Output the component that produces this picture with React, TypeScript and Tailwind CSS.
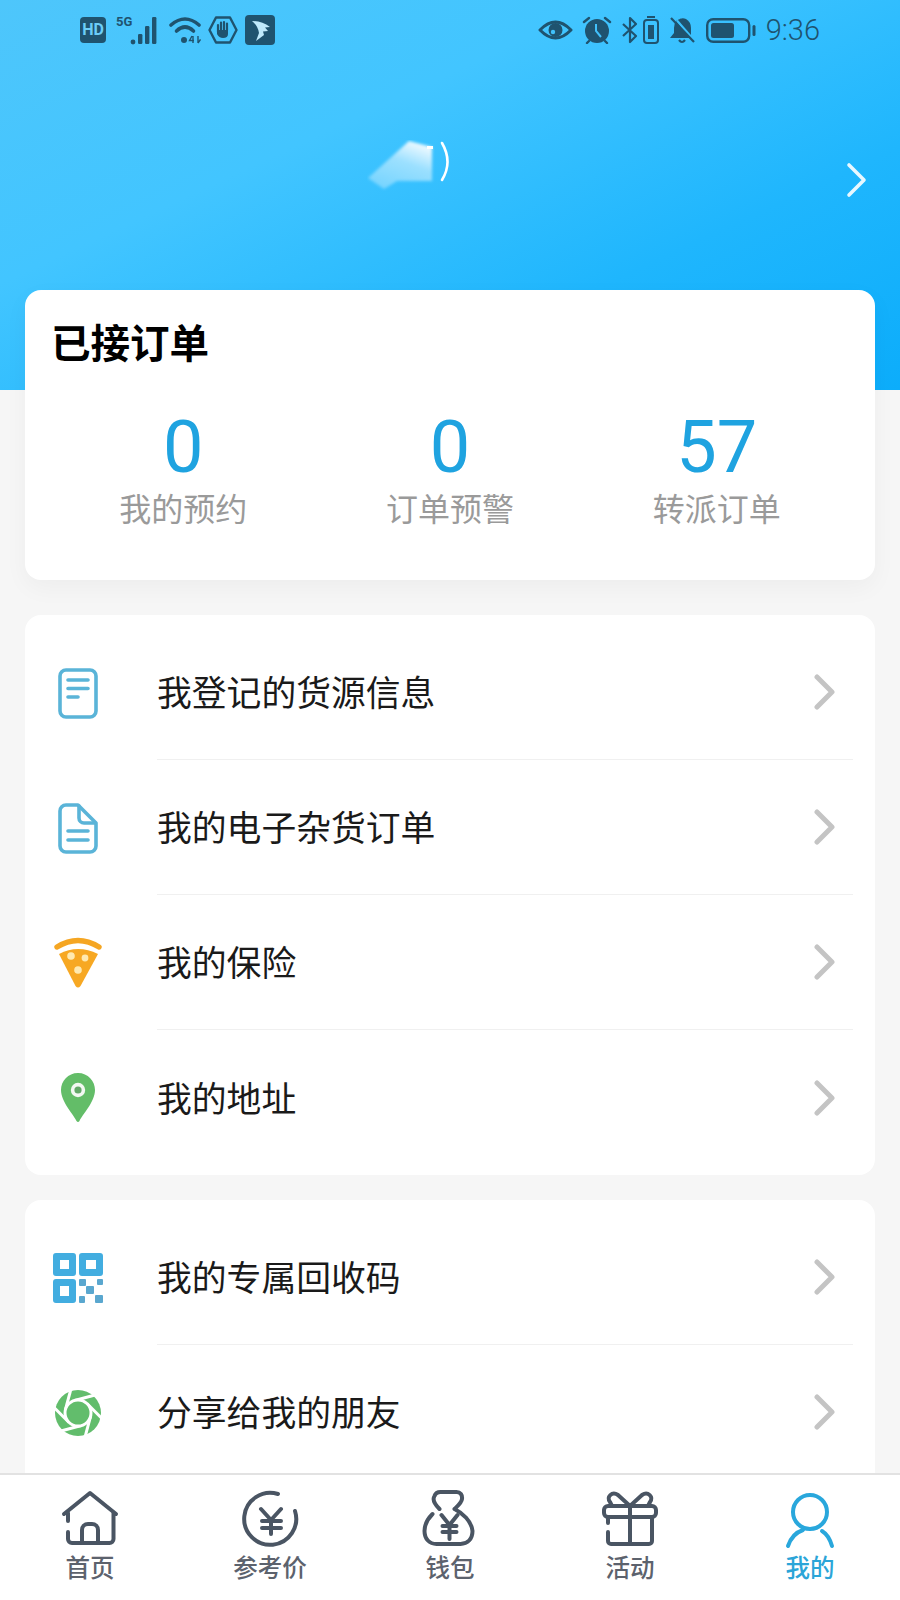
import React from "react";

const cjk = "font-['Noto_Sans_CJK_SC','Noto_Sans',sans-serif]";
const sb = "#1f536f";
const bgc = "#41c1fb";

function HD() {
  return (
    <span className="flex h-[26px] w-[26px] items-center justify-center rounded-[4px] bg-[#1f536f] font-['Roboto',sans-serif] text-[16px] font-bold text-[#6ccdf7]">
      HD
    </span>
  );
}
function Signal() {
  return (
    <svg width="44" height="30" viewBox="0 0 44 30" className="shrink-0">
      <text x="0" y="11" fontSize="13" fontWeight="700" fill={sb} fontFamily="Roboto, sans-serif">5G</text>
      <circle cx="17" cy="27" r="2.4" fill={sb} />
      <rect x="22" y="19" width="4.4" height="10" rx="1.2" fill={sb} />
      <rect x="29" y="11" width="4.4" height="18" rx="1.2" fill={sb} />
      <rect x="36" y="2" width="4.4" height="27" rx="1.2" fill={sb} />
    </svg>
  );
}
function Wifi() {
  return (
    <svg width="32" height="28" viewBox="0 0 32 28" fill="none" stroke={sb} className="shrink-0">
      <path d="M2 9 Q16 -3 30 9" strokeWidth="3.6" strokeLinecap="round" />
      <path d="M7.5 15 Q16 7 24.5 15" strokeWidth="3.6" strokeLinecap="round" />
      <circle cx="15" cy="24" r="3" fill={sb} stroke="none" />
      <path d="M23 20 L20.5 24.5 H25 M24 20 V27" strokeWidth="1.4" />
      <path d="M29 20 V27 M29 27 L31.5 23.5" strokeWidth="1.4" />
    </svg>
  );
}
function StopHand() {
  return (
    <svg width="30" height="28" viewBox="0 0 30 28" fill="none" className="shrink-0">
      <path d="M8 1.5 H22 L28.5 14 L22 26.5 H8 L1.5 14Z" stroke={sb} strokeWidth="2.4" strokeLinejoin="round" />
      <path d="M10 16 V9 M13 14 V6.5 M16 14 V6 M19 14 V7.5" stroke={sb} strokeWidth="2.2" strokeLinecap="round" />
      <path d="M9 14 H20 V18 Q20 22 15 22 Q11 22 9 18Z" fill={sb} />
    </svg>
  );
}
function AppIcon() {
  return (
    <svg width="30" height="30" viewBox="0 0 30 30" className="shrink-0">
      <rect width="30" height="30" rx="4" fill={sb} />
      <path d="M7 6 Q17 6 25 12 L20 12.5 L23 16 L18 16.5 L19 20 L11 26 L14 18 Q13 11 7 6Z" fill="#bfe9fb" />
    </svg>
  );
}
function Eye() {
  return (
    <svg width="35" height="22" viewBox="0 0 35 22" fill="none" className="shrink-0">
      <path d="M2 11 Q17.5 -5 33 11 Q17.5 27 2 11Z" stroke={sb} strokeWidth="3" strokeLinejoin="round" />
      <circle cx="17.5" cy="11" r="7" fill={sb} />
      <circle cx="15" cy="13" r="2.2" fill={bgc} />
    </svg>
  );
}
function Alarm() {
  return (
    <svg width="30" height="28" viewBox="0 0 30 28" fill="none" className="shrink-0">
      <circle cx="15" cy="15" r="12" fill={sb} />
      <path d="M14 8 V15 L19 21" stroke={bgc} strokeWidth="2" />
      <path d="M2 6 L7 2 M28 6 L23 2 M7 25 L5 27 M23 25 L25 27" stroke={sb} strokeWidth="2.4" strokeLinecap="round" />
    </svg>
  );
}
function Bluetooth() {
  return (
    <svg width="16" height="28" viewBox="0 0 16 28" fill="none" stroke={sb} strokeWidth="2.2" className="shrink-0">
      <path d="M1 8 L14 20 L8 26 V2 L14 8 L1 20" strokeLinejoin="round" />
    </svg>
  );
}
function SmallBattery() {
  return (
    <svg width="16" height="28" viewBox="0 0 16 28" fill="none" className="shrink-0">
      <path d="M4 1 H12" stroke={sb} strokeWidth="2" />
      <rect x="1" y="4" width="14" height="23" rx="3" stroke={sb} strokeWidth="2" />
      <rect x="5" y="9" width="6" height="14" fill={sb} />
    </svg>
  );
}
function BellOff() {
  return (
    <svg width="27" height="28" viewBox="0 0 27 28" fill="none" className="shrink-0">
      <path d="M13 2 Q5 4 5 12 V17 L1 22 H21 L7 5Z" fill={sb} />
      <path d="M9 4 Q13 1 17 3 Q22 6 22 12 V19 Z" fill={sb} />
      <path d="M10 24 Q13 28 16 24" stroke={sb} strokeWidth="2.2" />
      <path d="M2 2 L25 26" stroke={sb} strokeWidth="2.2" />
    </svg>
  );
}
function Battery() {
  return (
    <svg width="50" height="25" viewBox="0 0 50 25" fill="none" className="shrink-0">
      <rect x="1.2" y="1.2" width="42" height="22.6" rx="6" stroke={sb} strokeWidth="2.4" />
      <rect x="5" y="5" width="23" height="15" rx="2.5" fill={sb} />
      <rect x="46.5" y="7" width="3" height="11" rx="1.5" fill={sb} />
    </svg>
  );
}

function StatusBar() {
  return (
    <div className="flex h-[60px] items-center justify-between pl-[80px] pr-[80px]">
      <div className="flex items-center">
        <HD />
        <span className="ml-[10px]"><Signal /></span>
        <span className="ml-[9px]"><Wifi /></span>
        <span className="ml-[7px]"><StopHand /></span>
        <span className="ml-[7px]"><AppIcon /></span>
      </div>
      <div className="flex items-center">
        <Eye />
        <span className="ml-[9px]"><Alarm /></span>
        <span className="ml-[10px]"><Bluetooth /></span>
        <span className="ml-[5px]"><SmallBattery /></span>
        <span className="ml-[10px]"><BellOff /></span>
        <span className="ml-[10px]"><Battery /></span>
        <span className="ml-[10px] font-['Roboto',sans-serif] text-[29px] font-light leading-none text-[#1f536f]">9:36</span>
      </div>
    </div>
  );
}

function Chevron({ color, w = 5, h = 30 }: { color: string; w?: number; h?: number }) {
  return (
    <svg width="22" height={h + 6} viewBox={`0 0 22 ${h + 6}`} fill="none" className="shrink-0">
      <path d={`M3 3 L18 ${(h + 6) / 2} L3 ${h + 3}`} stroke={color} strokeWidth={w} strokeLinecap="round" strokeLinejoin="round" />
    </svg>
  );
}

function Smear() {
  return (
    <svg width="90" height="52" viewBox="0 0 90 52" fill="none" className="shrink-0">
      <defs>
        <linearGradient id="sm" x1="0.2" y1="1" x2="0.7" y2="0">
          <stop offset="0" stopColor="#ffffff" stopOpacity="0.3" />
          <stop offset="0.6" stopColor="#ffffff" stopOpacity="0.5" />
          <stop offset="1" stopColor="#ffffff" stopOpacity="0.92" />
        </linearGradient>
        <filter id="bl"><feGaussianBlur stdDeviation="1.6" /></filter>
      </defs>
      <path d="M42 1 L65 7 V41 L30 41 L17 49 L1 38Z" fill="url(#sm)" filter="url(#bl)" />
      <rect x="60" y="6" width="6" height="3" fill="#ffffff" />
      <path d="M75 3 Q86 22 75 40" stroke="#ffffff" strokeWidth="2.6" strokeLinecap="round" />
    </svg>
  );
}

function Stat({ n, label }: { n: string; label: string }) {
  return (
    <div className="flex flex-col items-center">
      <span className="font-['Roboto',sans-serif] text-[72px] font-[450] leading-[72px] text-[#1fa3e0]">{n}</span>
      <span className="mt-[3px] text-[32px] leading-[40px] text-[#9a9a9a]">{label}</span>
    </div>
  );
}

function Doc1() {
  return (
    <svg width="60" height="60" viewBox="0 0 60 60" fill="none" stroke="#5ab4d8" strokeWidth="3.6" strokeLinecap="round">
      <rect x="12" y="7" width="36" height="47" rx="6" />
      <path d="M20 17 H40 M20 25.5 H40 M20 34 H30" />
    </svg>
  );
}
function Doc2() {
  return (
    <svg width="60" height="60" viewBox="0 0 60 60" fill="none" stroke="#5ab4d8" strokeWidth="3.6" strokeLinecap="round" strokeLinejoin="round">
      <path d="M18 7 H30 L48 25 V48 a6 6 0 0 1-6 6 H18 a6 6 0 0 1-6-6 V13 a6 6 0 0 1 6-6Z" />
      <path d="M31 8 V20 a5 5 0 0 0 5 5 H47" />
      <path d="M20 33 H40 M20 42 H40" />
    </svg>
  );
}
function Pizza() {
  return (
    <svg width="60" height="60" viewBox="0 0 60 60" fill="none">
      <path d="M9 14 Q30 1 51 14" stroke="#f5a623" strokeWidth="5.4" strokeLinecap="round" />
      <path d="M11 21 Q30 11 50 21 L32.5 53 q-2.5 3 -5 0Z" fill="#f7a823" />
      <circle cx="23" cy="23" r="3.8" fill="#ffe9b0" />
      <circle cx="37" cy="25" r="3.4" fill="#ffe9b0" />
      <circle cx="30" cy="37" r="3.8" fill="#ffe9b0" />
    </svg>
  );
}
function Pin() {
  return (
    <svg width="60" height="60" viewBox="0 0 60 60" fill="none">
      <path d="M30 5 C20 5 13 13 13 22 C13 34 26 47 28.5 53 q1.5 2 3 0 C34 47 47 34 47 22 C47 13 40 5 30 5Z" fill="#63bd68" />
      <circle cx="30" cy="22" r="7.2" fill="#f2f8f2" />
      <circle cx="30" cy="22" r="3.6" fill="#63a868" />
    </svg>
  );
}
function Qr() {
  return (
    <svg width="60" height="60" viewBox="0 0 60 60" fill="none">
      <g fill="#42ade0">
        <path fillRule="evenodd" d="M8 5 H25 a3 3 0 0 1 3 3 V25 a3 3 0 0 1-3 3 H8 a3 3 0 0 1-3-3 V8 a3 3 0 0 1 3-3Z M12 12 V21 H21 V12Z" />
        <path fillRule="evenodd" d="M34 5 H52 a3 3 0 0 1 3 3 V25 a3 3 0 0 1-3 3 H34 a3 3 0 0 1-3-3 V8 a3 3 0 0 1 3-3Z M38 12 V21 H48 V12Z" />
        <path fillRule="evenodd" d="M8 31 H25 a3 3 0 0 1 3 3 V52 a3 3 0 0 1-3 3 H8 a3 3 0 0 1-3-3 V34 a3 3 0 0 1 3-3Z M12 38 V48 H21 V38Z" />
      </g>
      <g fill="#5aa7cf">
        <rect x="31" y="31" width="7" height="7" rx="1" />
        <rect x="49" y="31" width="6" height="6" rx="1" />
        <rect x="38" y="38" width="8" height="8" rx="1" />
        <rect x="31" y="48" width="6" height="7" rx="1" />
        <rect x="47" y="47" width="8" height="8" rx="1" />
      </g>
    </svg>
  );
}
function Aperture() {
  return (
    <svg width="60" height="60" viewBox="0 0 60 60" fill="none">
      <circle cx="30" cy="30" r="23" fill="#62bd6c" />
      <g transform="translate(30 30)" stroke="#ffffff" strokeWidth="3">
        {[0, 60, 120, 180, 240, 300].map((a) => (
          <line key={a} x1="13" y1="0" x2="13" y2="24" transform={`rotate(${a + 15})`} />
        ))}
        <circle r="13" fill="#62bd6c" />
      </g>
    </svg>
  );
}

function Row({ icon, text, line = true }: { icon: React.ReactNode; text: string; line?: boolean }) {
  return (
    <div className="flex h-[135px]">
      <div className="flex w-[132px] shrink-0 items-center justify-start pl-[23px]">{icon}</div>
      <div className={`mr-[22px] flex flex-1 items-center justify-between pr-[17px] ${line ? "border-b border-[#f0f0f0]" : ""}`}>
        <span className="mb-[2px] text-[34.8px] leading-[44px] text-[#1a1a1a]">{text}</span>
        <Chevron color="#c4c4c4" />
      </div>
    </div>
  );
}

const S = "#4a5563";
function NavHome() {
  return (
    <svg width="60" height="60" viewBox="0 0 60 60" fill="none" stroke={S} strokeWidth="4" strokeLinecap="round" strokeLinejoin="round">
      <path d="M4 25 L30 4 L56 25" />
      <path d="M53.5 24 V50 a4 4 0 0 1-4 4 H12 a4 4 0 0 1-4-4 V43" />
      <path d="M8 32 V24" />
      <path d="M22 54 V41 a6 6 0 0 1 6-6 H32 a6 6 0 0 1 6 6 V54" />
    </svg>
  );
}
function NavYuan() {
  return (
    <svg width="60" height="60" viewBox="0 0 60 60" fill="none" stroke={S} strokeWidth="4" strokeLinecap="round" strokeLinejoin="round">
      <path d="M38 5 A26 26 0 1 0 55 22" />
      <path d="M21 20 L31 31 L41 20 M22 32 H41 M22 39 H41 M31 31 V45" />
    </svg>
  );
}
function NavBag() {
  return (
    <svg width="60" height="60" viewBox="0 0 60 60" fill="none" stroke={S} strokeWidth="4" strokeLinecap="round" strokeLinejoin="round" className="-translate-x-[1.5px]">
      <path d="M21 20 C16 15 14 10 16 7 C17 4 19 3 22 3 H38 C42 3 44 6 43.5 10 C43 14 39 17 36 20 C44 24 53 32 54 42 C54 50 49 55 42 55 H18 C11 55 6 50 6 42 C6 35 10 29 14 25" />
      <path d="M23 26 L31 36 L39 26 M24 37 H38 M24 43 H38 M31 36 V50" />
    </svg>
  );
}
function NavGift() {
  return (
    <svg width="60" height="60" viewBox="0 0 60 60" fill="none" stroke={S} strokeWidth="4" strokeLinecap="round" strokeLinejoin="round">
      <rect x="4" y="17" width="52" height="11" rx="4" />
      <path d="M8 28 V34 M8 43 V52 a3 3 0 0 0 3 3 H49 a3 3 0 0 0 3-3 V28 M30 17 V55" />
      <path d="M30 17 L18 6 C12 2 6 8 10 13 L12 17 M30 17 L42 6 C48 2 54 8 50 13 L48 17" />
    </svg>
  );
}
function NavUser() {
  return (
    <svg width="60" height="60" viewBox="0 0 60 60" fill="none" stroke="#29a7dc" strokeWidth="4" strokeLinecap="round">
      <circle cx="30" cy="23" r="17" />
      <path d="M8 57 C11 48 17 43 23 41 M42 42 C47 45 50 50 52 57" />
    </svg>
  );
}

function NavItem({ icon, label, active }: { icon: React.ReactNode; label: string; active?: boolean }) {
  return (
    <div className="flex flex-col items-center pt-[14px]">
      {icon}
      <span className={`mt-[3px] text-[24.5px] font-medium leading-[30px] ${active ? "text-[#2ba5d8]" : "text-[#5c626d]"}`}>{label}</span>
    </div>
  );
}

export default function App() {
  return (
    <div className={`flex h-[1600px] w-[900px] flex-col overflow-hidden bg-[#f6f6f6] ${cjk}`}>
      <div className="min-h-0 flex-1 overflow-hidden bg-[linear-gradient(155deg,#4ec6fb_0%,#42c5ff_35%,#1fb6fd_70%,#0cadfb_100%)] bg-[length:100%_390px] bg-no-repeat">
        <StatusBar />
        <div className="flex h-[230px] items-start justify-between pl-[367px] pr-[32px] pt-[80px]">
          <Smear />
          <div className="mt-[22px]">
            <Chevron color="#e8f8ff" w={3.6} />
          </div>
        </div>

        <section className="mx-[25px] h-[290px] rounded-[16px] bg-white px-[25px] shadow-[0_8px_24px_rgba(0,0,0,0.04)]">
          <h2 className="pl-px pt-[27px] text-[39.5px] font-bold leading-[48px] text-black">已接订单</h2>
          <div className="mt-[47px] grid grid-cols-3">
            <Stat n="0" label="我的预约" />
            <Stat n="0" label="订单预警" />
            <Stat n="57" label="转派订单" />
          </div>
        </section>

        <section className="mx-[25px] mt-[35px] rounded-[16px] bg-white py-[10px]">
          <Row icon={<Doc1 />} text="我登记的货源信息" />
          <Row icon={<Doc2 />} text="我的电子杂货订单" />
          <Row icon={<Pizza />} text="我的保险" />
          <Row icon={<Pin />} text="我的地址" line={false} />
        </section>

        <section className="mx-[25px] mt-[25px] rounded-[16px] bg-white py-[10px]">
          <Row icon={<Qr />} text="我的专属回收码" />
          <Row icon={<Aperture />} text="分享给我的朋友" />
        </section>
      </div>

      <nav className="grid h-[127px] shrink-0 grid-cols-5 border-t-2 border-[#e2e2e2] bg-white">
        <NavItem icon={<NavHome />} label="首页" />
        <NavItem icon={<NavYuan />} label="参考价" />
        <NavItem icon={<NavBag />} label="钱包" />
        <NavItem icon={<NavGift />} label="活动" />
        <NavItem icon={<NavUser />} label="我的" active />
      </nav>
    </div>
  );
}
